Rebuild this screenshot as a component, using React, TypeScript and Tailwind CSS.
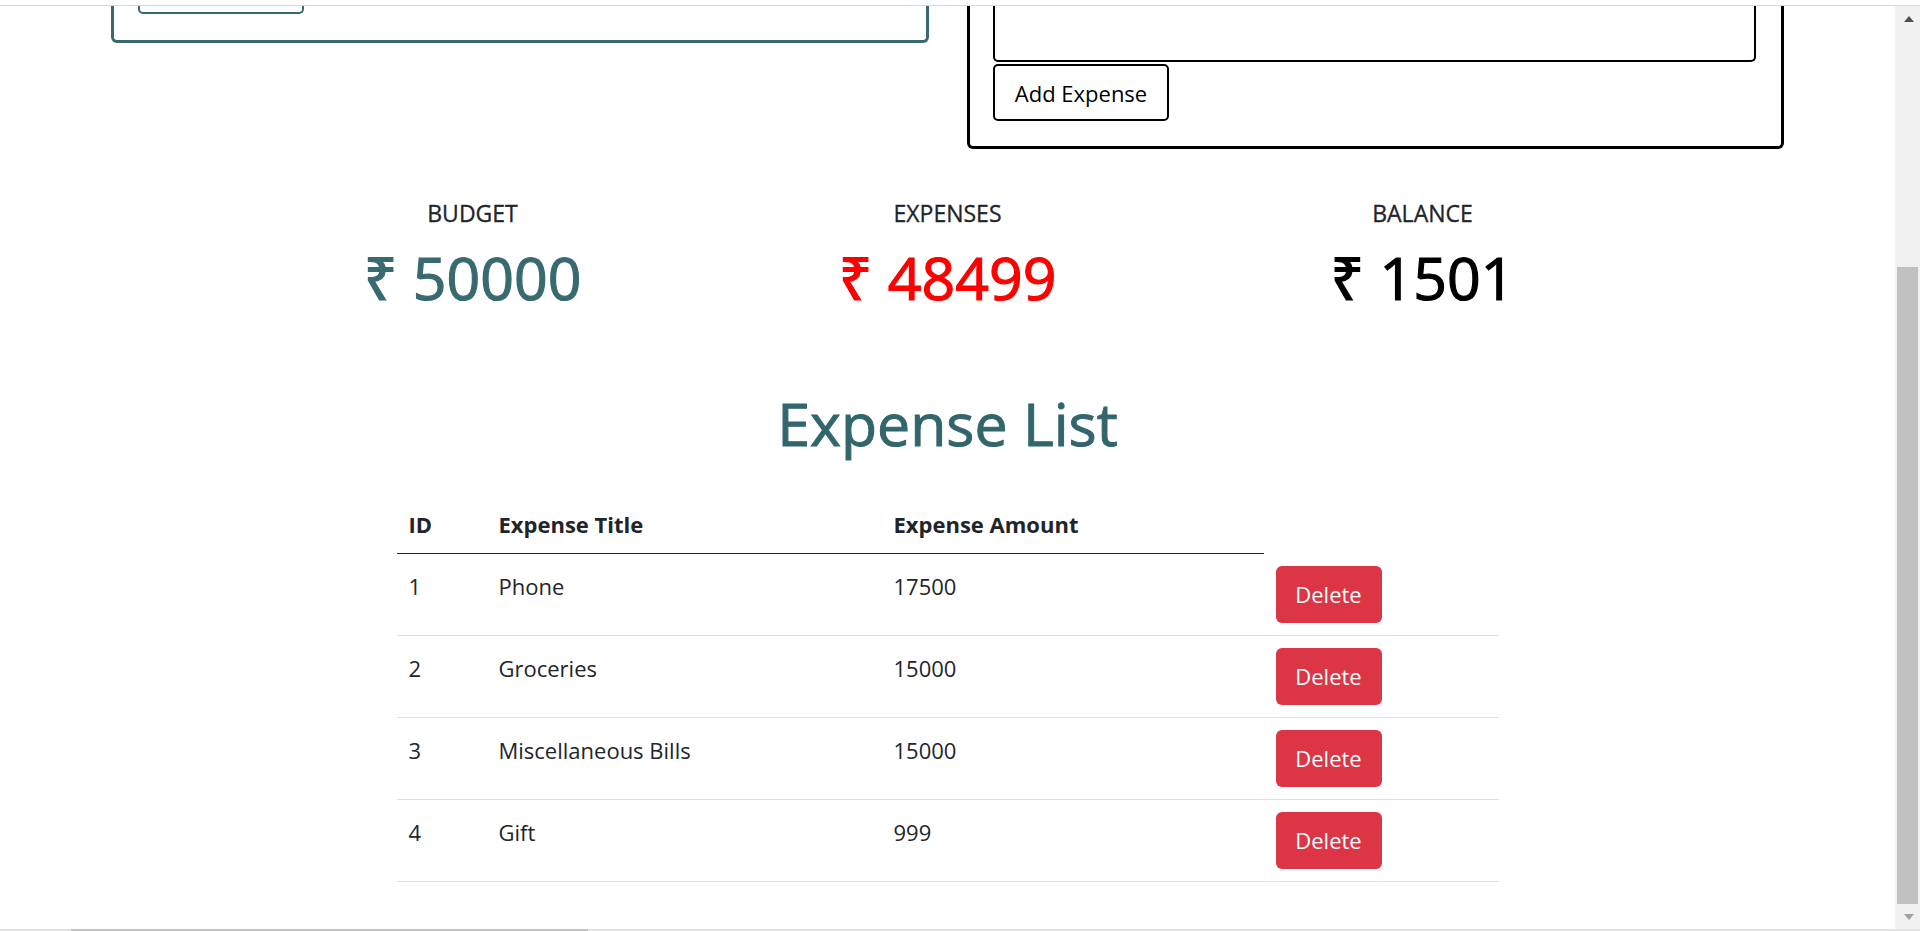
import React from "react";

const font = { fontFamily: "'Open Sans', 'Noto Sans', sans-serif" };

const expenses = [
  { id: 1, title: "Phone", amount: 17500 },
  { id: 2, title: "Groceries", amount: 15000 },
  { id: 3, title: "Miscellaneous Bills", amount: 15000 },
  { id: 4, title: "Gift", amount: 999 },
];

function Stat({ label, value, color }: { label: string; value: string; color: string }) {
  return (
    <div className="flex flex-col items-center">
      <p className="text-[23px] leading-[34px] text-[#212529] [-webkit-text-stroke:0.3px_currentColor]">{label}</p>
      <p className={`mt-[11px] text-[59px] leading-[72px] [-webkit-text-stroke:1.2px_currentColor] ${color}`}>{value}</p>
    </div>
  );
}

function Scrollbar() {
  return (
    <div className="flex h-full w-[25px] shrink-0 flex-col bg-[#f1f1f1]">
      <div className="flex h-[25px] items-center justify-center pl-[2px]">
        <svg width="10" height="6" viewBox="0 0 10 6">
          <path d="M5 0 L10 6 L0 6 Z" fill="#505050" />
        </svg>
      </div>
      <div className="ml-[2px] mt-[236px] h-[637px] w-[21px] bg-[#c1c1c1]" />
      <div className="flex flex-1 items-center justify-center pl-[2px]">
        <svg width="10" height="6" viewBox="0 0 10 6">
          <path d="M0 0 L10 0 L5 6 Z" fill="#a3a3a3" />
        </svg>
      </div>
    </div>
  );
}

export default function App() {
  return (
    <div className="flex h-[931px] w-[1920px] flex-col overflow-hidden bg-white" style={font}>
      {/* browser strip */}
      <div className="h-[5px] shrink-0 bg-white" />
      <div className="h-px shrink-0 bg-[#d9d9d9]" />

      <div className="flex min-h-0 flex-1">
        <div className="flex-1">
          {/* Cards (cut off at the top) */}
          <div className="flex items-start pl-[111px]">
            <div className="h-[37px] w-[818px] rounded-b-[6px] border-x-[3px] border-b-[3px] border-[#386a70] pl-[24px]">
              <div className="h-[8px] w-[166px] rounded-b-[5px] border-x-2 border-b-2 border-[#386a70]" />
            </div>
            <div className="ml-[38px] h-[143px] w-[817px] rounded-b-[6px] border-x-[3px] border-b-[3px] border-black pl-[23px] pr-[25px]">
              <div className="h-[56px] rounded-b-[5px] border-x-2 border-b-2 border-black" />
              <button className="mt-[2px] flex h-[57px] w-[176px] items-center justify-center rounded-[5px] border-2 border-black pt-[2px] text-[22px] leading-[33px] text-black">
                Add Expense
              </button>
            </div>
          </div>

          {/* Summary */}
          <div className="mx-auto mt-[47px] grid w-[1425px] grid-cols-3">
            <Stat label="BUDGET" value="₹ 50000" color="text-[#386a70]" />
            <Stat label="EXPENSES" value="₹ 48499" color="text-[#ff0000]" />
            <Stat label="BALANCE" value="₹ 1501" color="text-black" />
          </div>

          {/* List */}
          <h2 className="mt-[74px] text-center text-[59px] leading-[72px] text-[#33666c] [-webkit-text-stroke:1px_currentColor]">
            Expense List
          </h2>

          <table className="mx-auto mt-[37px] w-[1102px] table-fixed border-collapse text-left text-[22px] leading-[33px] text-[#212529]">
            <colgroup>
              <col className="w-[90px]" />
              <col className="w-[395px]" />
              <col className="w-[382px]" />
              <col className="w-[235px]" />
            </colgroup>
            <thead>
              <tr>
                <th className="border-b border-[#212529] px-3 py-3 font-bold">ID</th>
                <th className="border-b border-[#212529] px-3 py-3 font-bold">Expense Title</th>
                <th className="border-b border-[#212529] px-3 py-3 font-bold">Expense Amount</th>
                <th />
              </tr>
            </thead>
            <tbody>
              {expenses.map((e) => (
                <tr key={e.id} className="border-b border-[#dee2e6]">
                  <td className="px-3 pb-3 pt-[16px] align-top">{e.id}</td>
                  <td className="px-3 pb-3 pt-[16px] align-top">{e.title}</td>
                  <td className="px-3 pb-3 pt-[16px] align-top">{e.amount}</td>
                  <td className="px-3 py-3 align-top">
                    <button className="flex h-[57px] w-[106px] items-center justify-center rounded-[6px] bg-[#dc3545] text-[22px] text-white">
                      Delete
                    </button>
                  </td>
                </tr>
              ))}
            </tbody>
          </table>
        </div>
        <Scrollbar />
      </div>

      {/* bottom edge */}
      <div className="flex h-[2px] shrink-0 bg-[#e3e3e3]">
        <div className="ml-[71px] w-[517px] bg-[#c4c4c4]" />
      </div>
    </div>
  );
}
